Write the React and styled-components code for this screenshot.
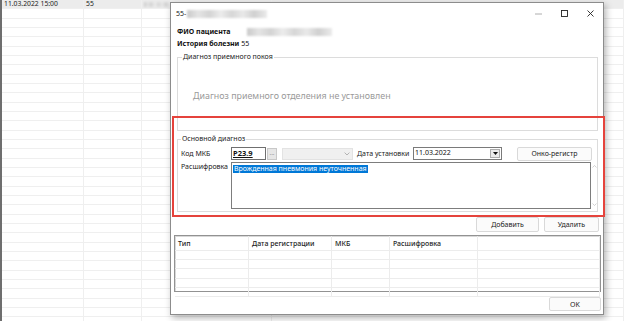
import styled, { createGlobalStyle } from 'styled-components';

const Global = createGlobalStyle`
  html, body { margin: 0; padding: 0; }
  body {
    width: 624px;
    height: 321px;
    overflow: hidden;
    background: #fff;
    font-family: "Noto Sans", "Open Sans", sans-serif;
  }
`;

const Screen = styled.div`
  position: relative;
  width: 624px;
  height: 321px;
  overflow: hidden;
  background: #fff;
`;

/* ---------- list behind the dialog ---------- */
const BgList = styled.div`
  display: flex;
  flex-direction: column;
  height: 100%;
  border-left: 2px solid #6e6e6e;
  box-sizing: border-box;
`;

const BgRow = styled.div`
  display: grid;
  grid-template-columns: 82px 58px 130px 1fr;
  height: 9.33px;
  flex: none;
  box-sizing: border-box;
  border-bottom: 1px solid #efefef;
  background: ${(p) => (p.$selected ? '#ececec' : '#fff')};
`;

const BgCell = styled.div`
  border-right: 1px solid #efefef;
  padding-left: 2px;
  font-size: 6.8px;
  line-height: 8.5px;
  color: #222;
  white-space: nowrap;
  overflow: hidden;
`;

const Redacted = styled.span`
  display: inline-block;
  width: ${(p) => p.$w}px;
  height: ${(p) => p.$h}px;
  vertical-align: middle;
  background: linear-gradient(
    90deg,
    #c9c9c9 0%,
    #e4e4e4 14%,
    #d3d3d3 28%,
    #ececec 42%,
    #d6d6d6 56%,
    #e9e9e9 70%,
    #d0d0d0 84%,
    #ebebeb 100%
  );
  filter: blur(0.8px);
`;

/* ---------- dialog window ---------- */
const Window = styled.div`
  position: absolute;
  left: 170px;
  top: 2px;
  width: 434px;
  height: 313px;
  box-sizing: border-box;
  border: 1px solid #8c8c8c;
  background: #fff;
  box-shadow: 2px 3px 7px rgba(0, 0, 0, 0.3);
  display: flex;
  flex-direction: column;
  font-size: 7px;
  color: #111;
`;

const TitleBar = styled.div`
  height: 21px;
  flex: none;
  display: flex;
  align-items: center;
  padding-left: 5px;
`;

const Title = styled.div`
  flex: 1;
  display: flex;
  align-items: center;
  gap: 1px;
  color: #222;
`;

const WinButton = styled.div`
  width: 26px;
  height: 21px;
  display: flex;
  align-items: center;
  justify-content: center;
`;

const Body = styled.div`
  flex: 1;
  display: flex;
  flex-direction: column;
  padding: 0 2px 0 6px;
`;

const InfoLine = styled.div`
  height: 10px;
  line-height: 10px;
  margin-top: ${(p) => p.$top}px;
  display: flex;
  align-items: center;
  white-space: nowrap;
`;

const Bold = styled.b`
  font-weight: 700;
  margin-right: ${(p) => p.$gap || 0}px;
`;

const GroupBox = styled.fieldset`
  margin: ${(p) => p.$top}px 3px 0 0;
  padding: 0 0 0 ${(p) => p.$pad}px;
  height: ${(p) => p.$h}px;
  box-sizing: border-box;
  border: 1px solid #dcdcdc;
  min-width: 0;
`;

const Legend = styled.legend`
  padding: 0 1px;
  font-size: 7px;
  line-height: 10px;
  color: #222;
`;

const Placeholder = styled.div`
  margin: 27px 0 0 11px;
  font-size: 8.9px;
  line-height: 14px;
  color: #9a9a9a;
  white-space: nowrap;
`;

const FieldRow = styled.div`
  display: flex;
  align-items: ${(p) => (p.$top ? 'flex-start' : 'center')};
  height: ${(p) => p.$h}px;
  margin-top: ${(p) => p.$mt}px;
`;

const Label = styled.div`
  width: ${(p) => p.$w}px;
  flex: none;
  white-space: nowrap;
  color: #222;
  line-height: 10px;
  margin-left: ${(p) => p.$ml || 0}px;
`;

const CodeInput = styled.div`
  width: 35px;
  height: 13px;
  box-sizing: border-box;
  border: 1px solid #6f6f6f;
  padding: 0 1px;
  font-weight: 700;
  font-size: 7.5px;
  line-height: 10px;
  text-decoration: underline;
  text-underline-offset: 1px;
`;

const DotsButton = styled.div`
  width: 10px;
  height: 12px;
  margin-left: 1px;
  box-sizing: border-box;
  border: 1px solid #c8c8c8;
  background: #e6e6e6;
  color: #777;
  font-size: 6px;
  line-height: 8px;
  text-align: center;
`;

const Combo = styled.div`
  width: 71px;
  height: 12px;
  margin-left: 5px;
  box-sizing: border-box;
  border: 1px solid #e3e3e3;
  background: #f0f0f0;
  display: flex;
  align-items: center;
  justify-content: flex-end;
  padding-right: 2px;
`;

const DateInput = styled.div`
  width: 89px;
  height: 13px;
  box-sizing: border-box;
  border: 1px solid #7a7a7a;
  display: flex;
  align-items: stretch;
`;

const DateText = styled.div`
  flex: 1;
  padding-left: 1px;
  line-height: 9px;
`;

const DropButton = styled.div`
  width: 10px;
  margin: 1px;
  box-sizing: border-box;
  border: 1px solid #adadad;
  background: #ececec;
  display: flex;
  align-items: center;
  justify-content: center;
`;

const Button = styled.div`
  width: ${(p) => p.$w}px;
  height: ${(p) => p.$h || 15}px;
  margin-left: ${(p) => p.$ml || 0}px;
  box-sizing: border-box;
  border: 1px solid #d9d9d9;
  border-radius: 2px;
  background: #fbfbfb;
  display: flex;
  align-items: center;
  justify-content: center;
  color: #222;
`;

const TextArea = styled.div`
  width: 360px;
  height: 47px;
  box-sizing: border-box;
  border: 1px solid #7d7d7d;
  padding: 1px;
`;

const Selected = styled.span`
  background: #0078d7;
  color: #fff;
  line-height: 8px;
  display: inline-block;
  padding: 0 1px;
`;

const ScrollBar = styled.div`
  width: 6px;
  height: 47px;
  display: flex;
  flex-direction: column;
  justify-content: space-between;
  align-items: center;
  padding: 3px 0;
  box-sizing: border-box;
`;

const ActionRow = styled.div`
  display: flex;
  justify-content: flex-end;
  margin-top: ${(p) => p.$mt}px;
  padding-right: ${(p) => p.$pr || 0}px;
`;

const Table = styled.div`
  margin: 3px 0 0 -3px;
  width: 427px;
  height: 57px;
  box-sizing: border-box;
  border: 1px solid #929292;
  box-shadow: inset 1px 1px 0 #d8d8d8;
  display: flex;
  flex-direction: column;
`;

const TRow = styled.div`
  display: grid;
  grid-template-columns: 74px 83px 58px 88px 1fr;
  height: ${(p) => p.$h}px;
  flex: none;
  border-bottom: 1px solid #ececec;
`;

const TCell = styled.div`
  border-right: 1px solid #ececec;
  padding-left: 3px;
  display: flex;
  align-items: center;
  font-weight: ${(p) => (p.$head ? 500 : 400)};
  color: #222;
  white-space: nowrap;
`;

const Annotation = styled.div`
  position: absolute;
  left: 172px;
  top: 116px;
  width: 433px;
  height: 101px;
  box-sizing: border-box;
  border: 2px solid #e5433c;
  pointer-events: none;
`;

const Chevron = ({ up, color = '#9a9a9a', size = 6 }) => (
  <svg width={size} height={size * 0.6} viewBox="0 0 10 6">
    <path
      d={up ? 'M1 5 L5 1 L9 5' : 'M1 1 L5 5 L9 1'}
      fill="none"
      stroke={color}
      strokeWidth="1.2"
    />
  </svg>
);

const bgRows = Array.from({ length: 35 });
const tableRows = Array.from({ length: 5 });

export default function App() {
  return (
    <Screen>
      <Global />
      <BgList>
        {bgRows.map((_, i) => (
          <BgRow key={i} $selected={i === 0}>
            <BgCell>{i === 0 ? '11.03.2022 15:00' : ''}</BgCell>
            <BgCell>{i === 0 ? '55' : ''}</BgCell>
            <BgCell>{i === 0 ? <Redacted $w={26} $h={5} /> : ''}</BgCell>
            <BgCell />
          </BgRow>
        ))}
      </BgList>

      <Window>
        <TitleBar>
          <Title>
            55-
            <Redacted $w={80} $h={8} />
          </Title>
          <WinButton>
            <svg width="7" height="2" viewBox="0 0 7 2">
              <line x1="0" y1="1" x2="7" y2="1" stroke="#9a9a9a" strokeWidth="0.8" />
            </svg>
          </WinButton>
          <WinButton>
            <svg width="7" height="7" viewBox="0 0 7 7">
              <rect x="0.5" y="0.5" width="6" height="6" fill="none" stroke="#222" strokeWidth="0.9" />
            </svg>
          </WinButton>
          <WinButton>
            <svg width="7" height="7" viewBox="0 0 7 7">
              <path d="M0.5 0.5 L6.5 6.5 M6.5 0.5 L0.5 6.5" stroke="#222" strokeWidth="0.9" />
            </svg>
          </WinButton>
        </TitleBar>

        <Body>
          <InfoLine $top={3}>
            <Bold $gap={16}>ФИО пациента</Bold>
            <Redacted $w={85} $h={8} />
          </InfoLine>
          <InfoLine $top={2}>
            <Bold $gap={2}>История болезни</Bold>55
          </InfoLine>

          <GroupBox $top={3} $h={79} $pad={4}>
            <Legend>Диагноз приемного покоя</Legend>
            <Placeholder>Диагноз приемного отделения не установлен</Placeholder>
          </GroupBox>

          <GroupBox $top={3} $h={78} $pad={3}>
            <Legend>Основной диагноз</Legend>
            <FieldRow $h={13} $mt={3}>
              <Label $w={50}>Код МКБ</Label>
              <CodeInput>P23.9</CodeInput>
              <DotsButton>...</DotsButton>
              <Combo>
                <Chevron />
              </Combo>
              <Label $w={56} $ml={4}>Дата установки</Label>
              <DateInput>
                <DateText>11.03.2022</DateText>
                <DropButton>
                  <svg width="5" height="3" viewBox="0 0 5 3">
                    <path d="M0 0 L5 0 L2.5 3 Z" fill="#111" />
                  </svg>
                </DropButton>
              </DateInput>
              <Button $w={75} $h={14} $ml={15}>Онко-регистр</Button>
            </FieldRow>
            <FieldRow $h={47} $mt={2} $top>
              <Label $w={50}>Расшифровка</Label>
              <TextArea>
                <Selected>Врожденная пневмония неуточненная</Selected>
              </TextArea>
              <ScrollBar>
                <Chevron up color="#b5b5b5" size={5} />
                <Chevron color="#b5b5b5" size={5} />
              </ScrollBar>
            </FieldRow>
          </GroupBox>

          <ActionRow $mt={5} $pr={2}>
            <Button $w={63}>Добавить</Button>
            <Button $w={55} $ml={5}>Удалить</Button>
          </ActionRow>

          <Table>
            <TRow $h={14}>
              <TCell $head>Тип</TCell>
              <TCell $head>Дата регистрации</TCell>
              <TCell $head>МКБ</TCell>
              <TCell $head>Расшифровка</TCell>
              <TCell />
            </TRow>
            {tableRows.map((_, i) => (
              <TRow key={i} $h={8.2}>
                <TCell />
                <TCell />
                <TCell />
                <TCell />
                <TCell />
              </TRow>
            ))}
          </Table>

          <ActionRow $mt={5}>
            <Button $w={52} $h={14}>OK</Button>
          </ActionRow>
        </Body>
      </Window>

      <Annotation />
    </Screen>
  );
}
